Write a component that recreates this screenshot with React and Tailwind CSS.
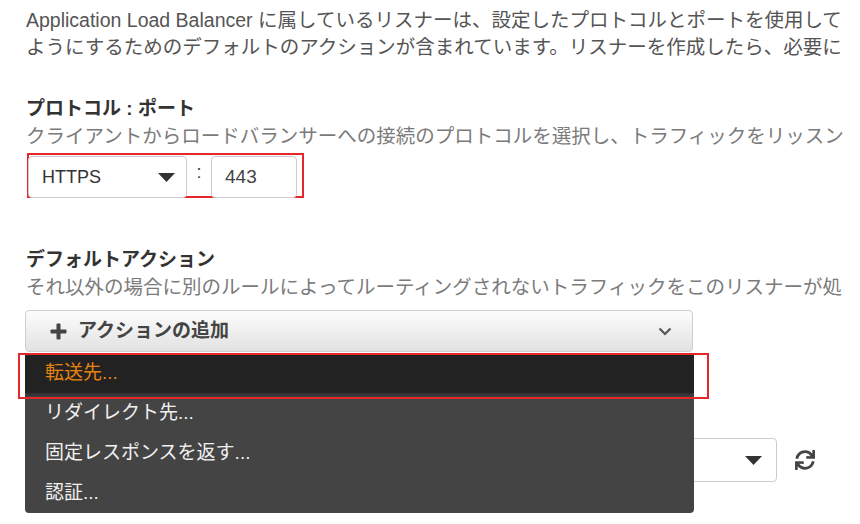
import { FaSync } from 'react-icons/fa';

const font = { fontFamily: '"Liberation Sans", "Noto Sans CJK JP", sans-serif' };

function Caret({ className }) {
  return (
    <svg className={className} width="17" height="9" viewBox="0 0 17 9">
      <polygon points="0,0 17,0 8.5,9" fill="#333" />
    </svg>
  );
}

function PlusIcon() {
  return (
    <svg width="17" height="17" viewBox="0 0 17 17">
      <rect x="6.5" y="0.5" width="4" height="16" rx="1" fill="#444" />
      <rect x="0.5" y="6.5" width="16" height="4" rx="1" fill="#444" />
    </svg>
  );
}

function App() {
  const items = ['転送先...', 'リダイレクト先...', '固定レスポンスを返す...', '認証...'];

  return (
    <div className="w-[860px] h-[524px] overflow-hidden bg-white pl-[26px] pt-[7px]" style={font}>
      <div className="w-[826px]">
        <p className="text-[19.5px] leading-[27px] text-[#555] whitespace-nowrap">
          Application Load Balancer に属しているリスナーは、設定したプロトコルとポートを使用して
        </p>
        <p className="text-[19.5px] leading-[27px] text-[#555] whitespace-nowrap">
          ようにするためのデフォルトのアクションが含まれています。リスナーを作成したら、必要に
        </p>

        <h3 className="mt-[34px] text-[19px] leading-[28px] font-bold text-[#333]">プロトコル : ポート</h3>
        <p className="text-[19.5px] leading-[27px] text-[#7b7b7b] whitespace-nowrap">
          クライアントからロードバランサーへの接続のプロトコルを選択し、トラフィックをリッスン
        </p>

        <div className="mt-[3px] ml-px inline-flex items-center border-2 border-[#e5262a] pr-[5px] h-[45px]">
          <div className="w-[159px] h-[42px] -ml-px -mb-[2px] self-end flex items-center justify-between pl-[13px] pr-[11px] border border-[#ccc] rounded-[4px] bg-white">
            <span className="text-[18px] text-[#333]">HTTPS</span>
            <Caret />
          </div>
          <span className="w-[24px] text-center text-[18px] text-[#444] -mt-[6px]">:</span>
          <div className="w-[86px] h-[42px] -mb-[2px] self-end flex items-center pl-[13px] border border-[#ccc] rounded-[4px] bg-white">
            <span className="text-[19px] text-[#444]">443</span>
          </div>
        </div>

        <h3 className="mt-[48px] text-[19px] leading-[28px] font-bold text-[#333]">デフォルトアクション</h3>
        <p className="text-[19.5px] leading-[26px] text-[#7b7b7b] whitespace-nowrap">
          それ以外の場合に別のルールによってルーティングされないトラフィックをこのリスナーが処
        </p>

        <div className="relative -ml-px mt-[10px] w-[668px]">
          <button className="w-full h-[42px] flex items-center justify-between pl-[24px] pr-[20px] rounded-[4px] border border-[#cfcfcf] bg-gradient-to-b from-[#fcfcfc] to-[#e2e2e2] text-[#444]">
            <span className="flex items-center gap-[11px] text-[19px] font-bold">
              <PlusIcon />
              アクションの追加
            </span>
            <svg width="14" height="9" viewBox="0 0 14 9">
              <polyline points="1.5,1.5 7,7 12.5,1.5" fill="none" stroke="#555" strokeWidth="2.2" />
            </svg>
          </button>

          <div className="absolute left-0 top-[43px] z-10 w-[669px] bg-[#444] rounded-b-[4px] overflow-hidden">
            {items.map((t, i) => (
              <div
                key={t}
                className={
                  i === 0
                    ? 'h-[40px] flex items-center pl-[20px] bg-[#222] text-[19px] text-[#e8830e] shadow-[0_3px_3px_rgba(0,0,0,0.25)] relative'
                    : 'h-[40px] flex items-center pl-[20px] text-[19px] text-[#f0f0f0]'
                }
              >
                {t}
              </div>
            ))}
          </div>
          <div className="absolute left-[-7px] top-[43px] z-20 w-[691px] h-[46px] border-2 border-[#e5262a] pointer-events-none" />
        </div>

        <div className="mt-[86px] -ml-px flex items-center gap-[18px]">
          <div className="w-[752px] h-[44px] flex items-center justify-end pr-[14px] border border-[#ccc] rounded-[4px] bg-white">
            <Caret />
          </div>
          <FaSync size={20} color="#444" />
        </div>
      </div>
    </div>
  );
}

export default App;
